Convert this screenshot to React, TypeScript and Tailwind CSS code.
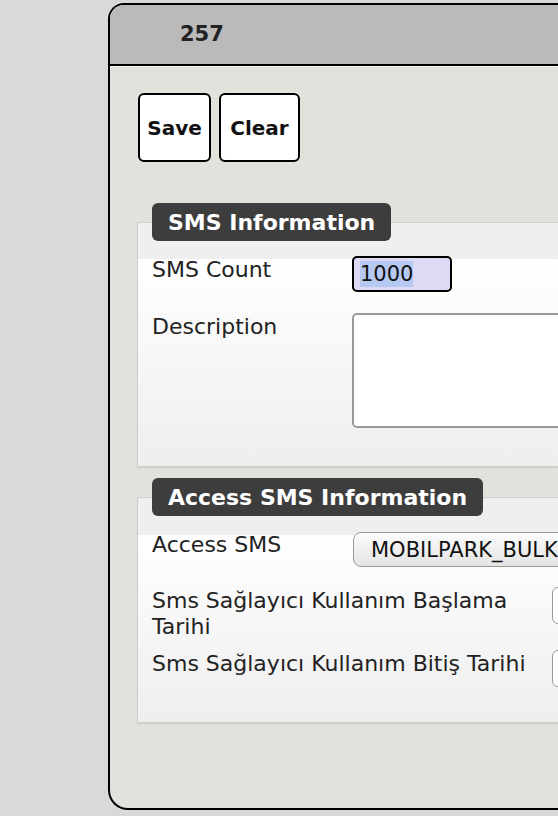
import React from "react";

const font = { fontFamily: '"DejaVu Sans", Verdana, sans-serif' };

const Legend = ({ title }: { title: string }) => (
  <div className="-mt-[20px] ml-[14px] flex h-[38px] w-fit items-center rounded-[6px] bg-[#3d3d3d] px-[16px] text-[22px] font-bold text-white">
    {title}
  </div>
);

const App = () => {
  return (
    <div
      className="min-h-[816px] w-[558px] overflow-hidden bg-[#d9d9d9] pl-[108px] pt-[3px] text-[#222]"
      style={font}
    >
      <div className="flex h-[807px] w-[600px] flex-col overflow-hidden rounded-tl-[16px] rounded-bl-[20px] border-2 border-r-0 border-black bg-[#e2e2dd]">
        {/* title bar */}
        <div className="flex h-[61px] shrink-0 items-center border-b-2 border-black bg-[#bababa] pl-[70px] text-[21px] font-bold text-[#222]">
          257
        </div>

        <div className="flex flex-col border-t border-[#f4f4f2] pl-[27px]">
          {/* toolbar */}
          <div className="mt-[26px] flex gap-[8px] pl-[1px]">
            <button className="flex h-[69px] w-[73px] items-center justify-center rounded-[6px] border-2 border-black bg-white text-[20px] font-bold text-[#111]">
              Save
            </button>
            <button className="flex h-[69px] w-[81px] items-center justify-center rounded-[6px] border-2 border-black bg-white text-[20px] font-bold text-[#111]">
              Clear
            </button>
          </div>

          {/* SMS Information */}
          <div className="mt-[60px] border border-r-0 border-[#cfcfcb] bg-[#efefef] shadow-[0_1px_1px_rgba(0,0,0,0.08)]">
            <Legend title="SMS Information" />
            <div className="mt-[15px] flex flex-col bg-[linear-gradient(to_bottom,transparent_3px,#ffffff_3px,#eeeeee)] pb-[38px] pl-[14px] text-[22px] leading-[26px]">
              <div className="flex items-start">
                <div className="w-[200px] shrink-0 pt-[1px]">SMS Count</div>
                <div className="flex h-[36px] w-[100px] shrink-0 items-center rounded-[5px] border-2 border-black bg-[#dcdaf5] pl-[6px] text-[21px] text-[#111]">
                  <span className="bg-[#b6c9f3]">1000</span>
                </div>
              </div>
              <div className="mt-[21px] flex items-start">
                <div className="w-[200px] shrink-0 pt-[1px]">Description</div>
                <div className="h-[115px] w-[300px] shrink-0 rounded-[5px] border-2 border-[#9a9a9a] bg-white" />
              </div>
            </div>
          </div>

          {/* Access SMS Information */}
          <div className="mt-[30px] border border-r-0 border-[#cfcfcb] bg-[#efefef] shadow-[0_1px_1px_rgba(0,0,0,0.08)]">
            <Legend title="Access SMS Information" />
            <div className="mt-[16px] flex flex-col bg-[linear-gradient(to_bottom,transparent_3px,#ffffff_3px,#eeeeee)] pb-[35px] pl-[14px] text-[22px] leading-[26px]">
              <div className="flex items-start">
                <div className="w-[201px] shrink-0">Access SMS</div>
                <div className="flex h-[35px] w-[300px] shrink-0 items-center rounded-[8px] border-[1.5px] border-[#9a9a9a] bg-[linear-gradient(to_bottom,#fbfbfb,#e4e4e4)] pl-[17px] text-[21px] whitespace-nowrap text-[#111]">
                  MOBILPARK_BULK
                </div>
              </div>
              <div className="mt-[20px] flex items-start">
                <div className="w-[400px] shrink-0 pt-[1px]">Sms Sağlayıcı Kullanım Başlama Tarihi</div>
                <div className="h-[37px] w-[100px] shrink-0 rounded-[6px] border-[1.5px] border-[#9a9a9a] bg-white" />
              </div>
              <div className="mt-[10px] flex items-start">
                <div className="w-[400px] shrink-0 pt-[1px]">Sms Sağlayıcı Kullanım Bitiş Tarihi</div>
                <div className="h-[37px] w-[100px] shrink-0 rounded-[6px] border-[1.5px] border-[#9a9a9a] bg-white" />
              </div>
            </div>
          </div>
        </div>
      </div>
    </div>
  );
};

export default App;
